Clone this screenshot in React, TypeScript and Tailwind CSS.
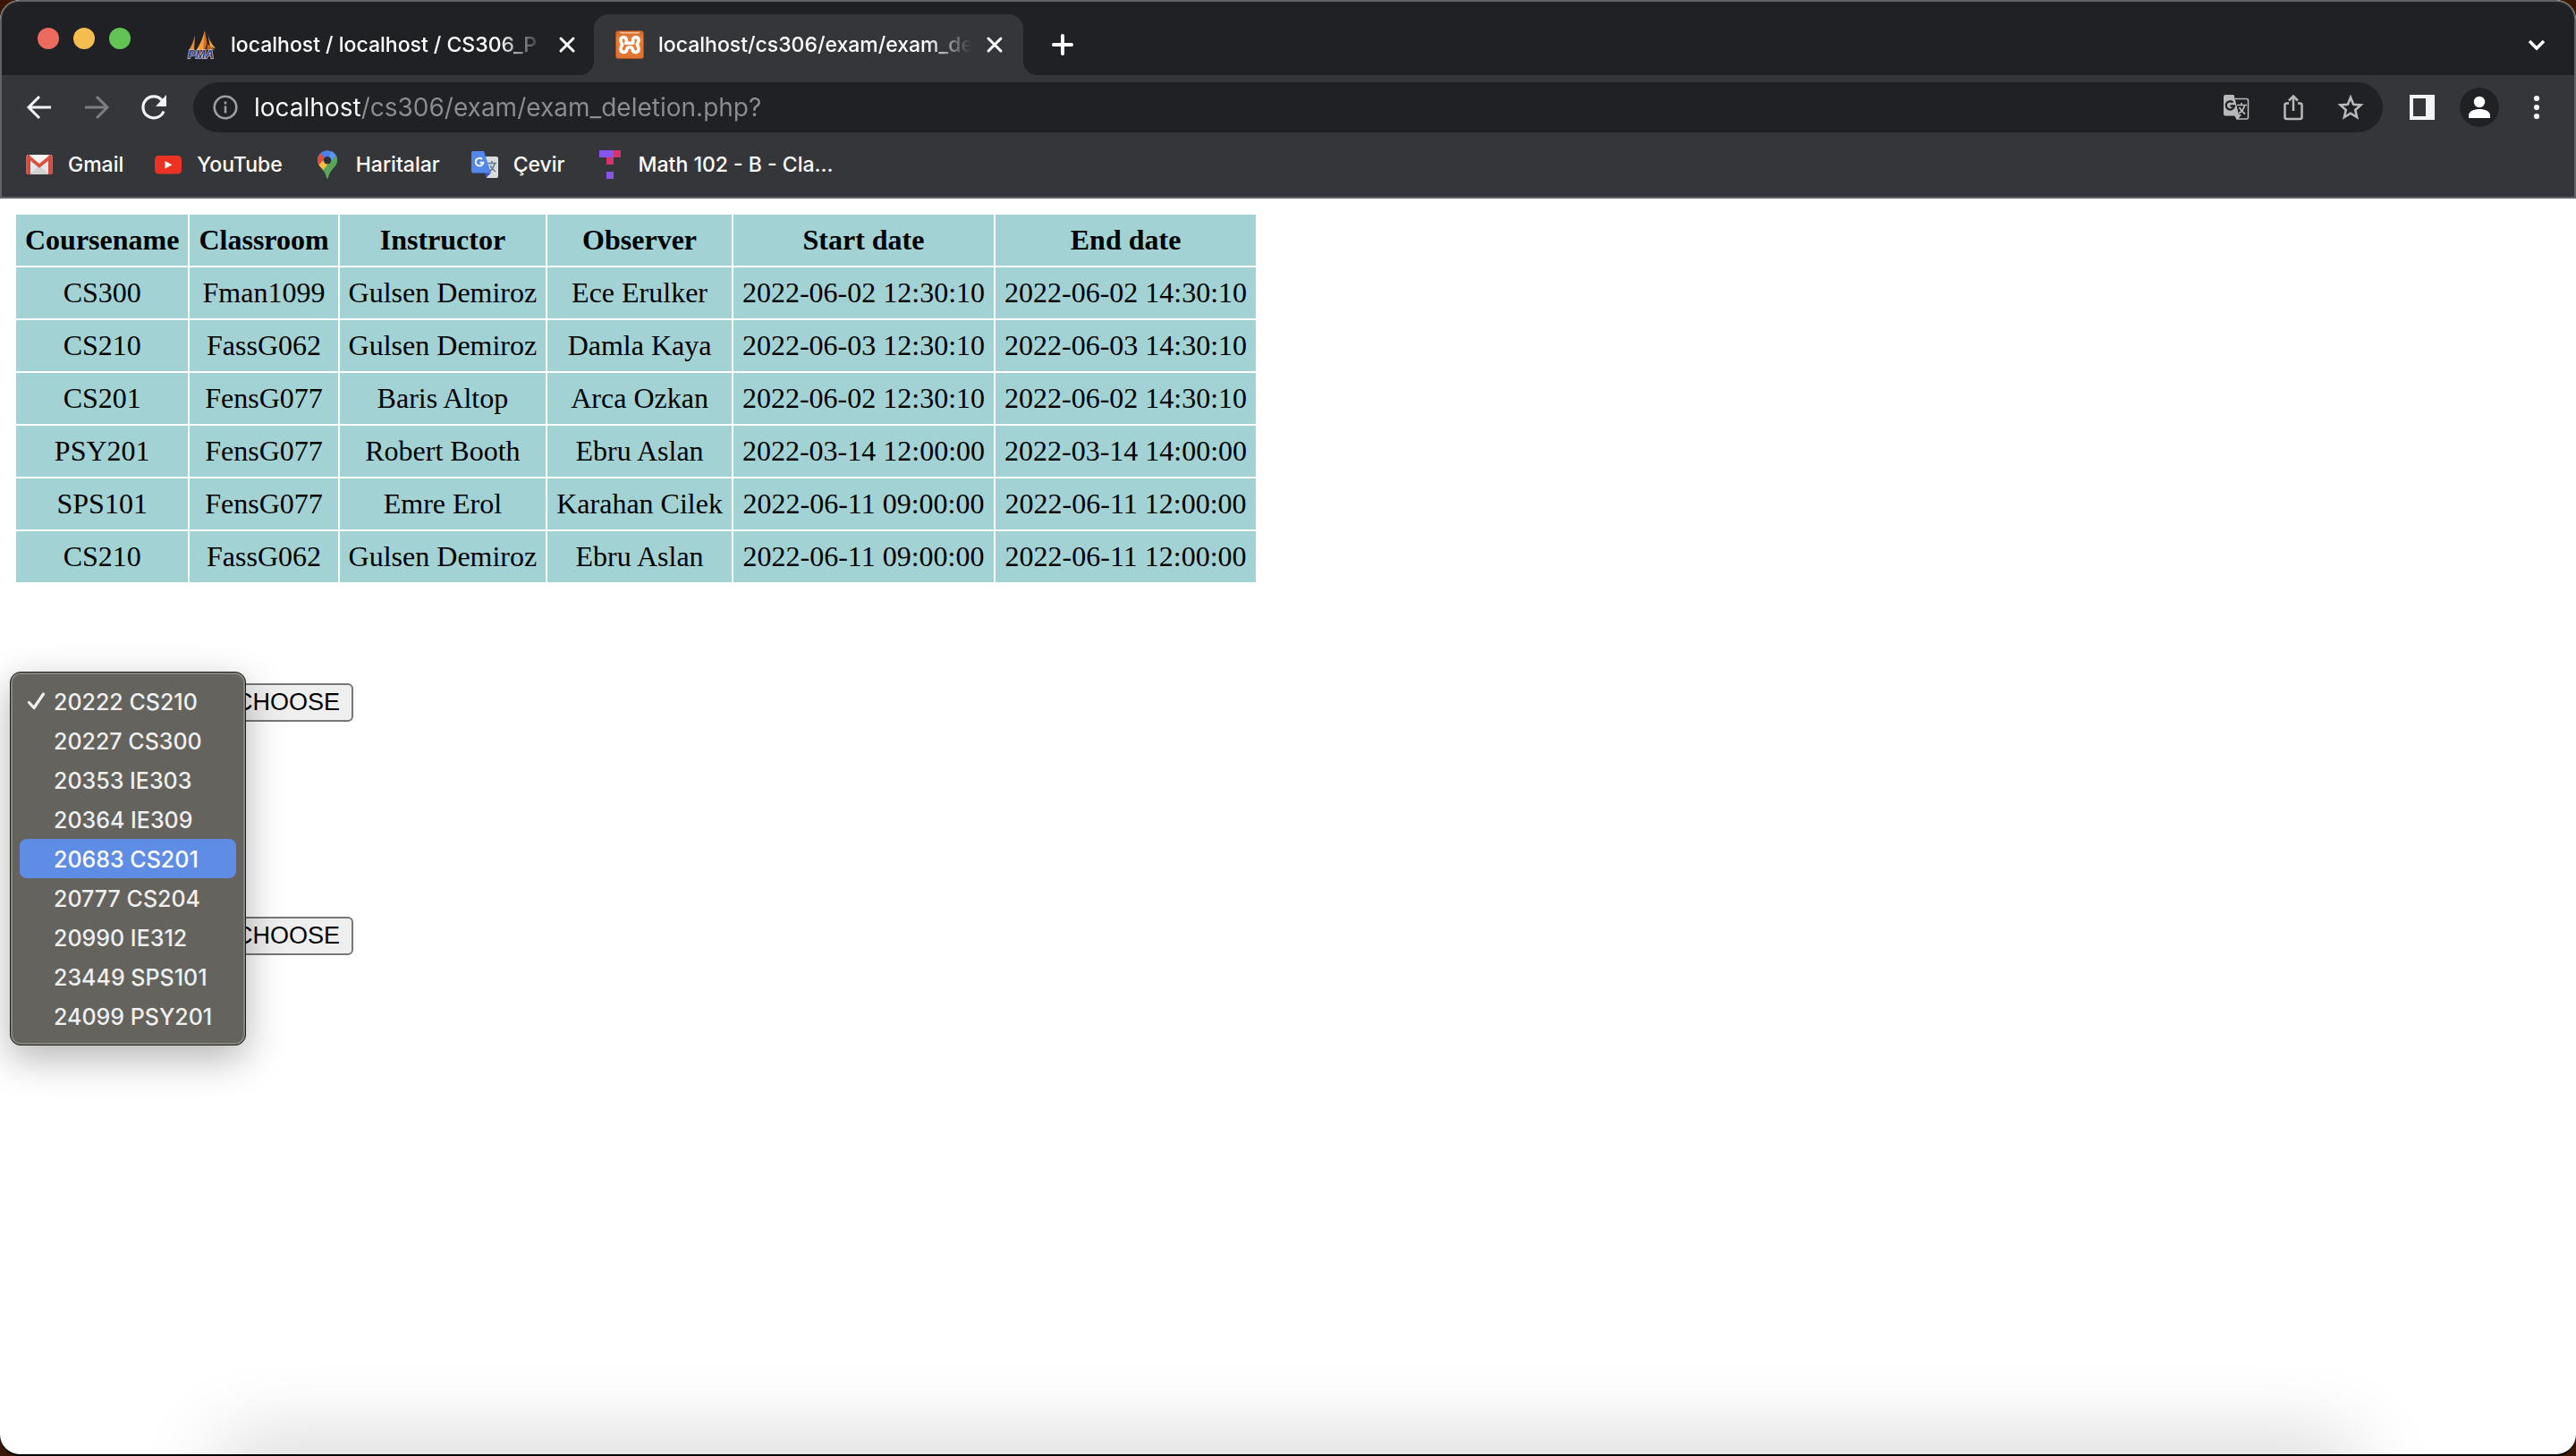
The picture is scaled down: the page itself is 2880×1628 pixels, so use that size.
import React from "react";

const columns = ["Coursename", "Classroom", "Instructor", "Observer", "Start date", "End date"];

const exams = [
  ["CS300", "Fman1099", "Gulsen Demiroz", "Ece Erulker", "2022-06-02 12:30:10", "2022-06-02 14:30:10"],
  ["CS210", "FassG062", "Gulsen Demiroz", "Damla Kaya", "2022-06-03 12:30:10", "2022-06-03 14:30:10"],
  ["CS201", "FensG077", "Baris Altop", "Arca Ozkan", "2022-06-02 12:30:10", "2022-06-02 14:30:10"],
  ["PSY201", "FensG077", "Robert Booth", "Ebru Aslan", "2022-03-14 12:00:00", "2022-03-14 14:00:00"],
  ["SPS101", "FensG077", "Emre Erol", "Karahan Cilek", "2022-06-11 09:00:00", "2022-06-11 12:00:00"],
  ["CS210", "FassG062", "Gulsen Demiroz", "Ebru Aslan", "2022-06-11 09:00:00", "2022-06-11 12:00:00"],
];

const courses = [
  "20222 CS210",
  "20227 CS300",
  "20353 IE303",
  "20364 IE309",
  "20683 CS201",
  "20777 CS204",
  "20990 IE312",
  "23449 SPS101",
  "24099 PSY201",
];

function CloseIcon() {
  return (
    <svg viewBox="0 0 32 32" className="size-8" fill="none" stroke="#fff" strokeWidth="3" strokeLinecap="round">
      <path d="M9 9l14 14M23 9L9 23" />
    </svg>
  );
}

function PmaIcon() {
  return (
    <svg viewBox="0 0 32 32" className="size-8 shrink-0 overflow-visible">
      <path d="M8 5L7 22H1C4 18 6.500 12 8 5z" fill="#e58b3a" />
      <path d="M19 0C17 8 14 15 9.500 22h9z" fill="#f89c3c" />
      <path d="M19 0l2.500 14L19 22h-2z" fill="#c96f28" />
      <path d="M22 2c1 7 4 13 9 18l-6-1z" fill="#f0a04a" />
      <path d="M22 15l8 7h-9z" fill="#b9652a" />
      <text x="0" y="31" fontFamily="Liberation Sans" fontSize="13" fontWeight="700" fontStyle="italic" fill="#3b3f78" stroke="#c8c8da" strokeWidth="1.400" paintOrder="stroke">
        PMA
      </text>
    </svg>
  );
}

function XamppIcon() {
  return (
    <svg viewBox="0 0 32 32" className="size-8 shrink-0">
      <defs>
        <linearGradient id="xg" x1="0" y1="0" x2="0" y2="1">
          <stop offset="0" stopColor="#c9682d" />
          <stop offset=".3" stopColor="#ec7c36" />
          <stop offset="1" stopColor="#e07330" />
        </linearGradient>
      </defs>
      <rect x=".5" y=".5" width="31" height="31" rx="2.500" fill="url(#xg)" stroke="#a4501c" />
      <path d="M4 1.800h24l-2 1.800H6z" fill="#f6bd94" />
      <g stroke="#fff" strokeWidth="3.600" fill="none" strokeLinecap="round" strokeLinejoin="round">
        <path d="M12.300 12v-1.500c0-4-6.300-4-6.300.5 0 2.300 1 3.500 1.800 5-1 1.500-1.800 2.800-1.800 4.800 0 4.800 6.300 4.700 6.800.4.200-1.900 1.200-2.500 3.200-2.500s3 .6 3.200 2.500c.5 4.300 6.800 4.400 6.800-.4 0-2-.8-3.300-1.800-4.800.8-1.500 1.800-2.700 1.800-5 0-4.500-6.300-4.500-6.300-.5V14.300H11.500" />
      </g>
    </svg>
  );
}

function GmailIcon() {
  return (
    <svg viewBox="0 0 32 32" className="size-8">
      <rect x="1.500" y="5" width="29" height="22" rx="2" fill="#e6e6e6" />
      <path d="M5 27l11-10 11 10z" fill="#d2d2d2" />
      <path d="M1.500 7.500A2.500 2.500 0 0 1 6 6v21H3.500a2 2 0 0 1-2-2zM30.500 7.500A2.500 2.500 0 0 0 26 6v21h2.500a2 2 0 0 0 2-2z" fill="#d24c40" />
      <path d="M5 5h22L16 14z" fill="#f4f4f4" />
      <path d="M2.500 6.500L16 17.500 29.500 6.500" stroke="#d9523f" strokeWidth="3.600" fill="none" />
    </svg>
  );
}

function YouTubeIcon() {
  return (
    <svg viewBox="0 0 32 32" className="size-8">
      <rect x="1" y="6" width="30" height="20.500" rx="4.500" fill="#ea3323" />
      <path d="M12.500 12l8 4.200-8 4.200z" fill="#fff" />
    </svg>
  );
}

function MapsIcon() {
  return (
    <svg viewBox="0 0 32 32" className="size-8">
      <defs>
        <clipPath id="pin">
          <path d="M16 .5C9.800 .5 5 5.300 5 11.300c0 5 3.500 7.500 6.500 11.200 2.200 2.700 3 5 3.500 8 .3 1.500 1.700 1.500 2 0 .5-3 1.300-5.300 3.500-8 3-3.700 6.500-6.200 6.500-11.200C27 5.300 22.200.5 16 .5z" />
        </clipPath>
      </defs>
      <g clipPath="url(#pin)">
        <rect width="32" height="32" fill="#58a55c" />
        <path d="M0 0h32v8l-6 3-10 8L4 12z" fill="#4a80ec" />
        <path d="M20 0h8v8l-12 8z" fill="#5a95f5" />
        <path d="M0 3l8 .5 8 7.500L4 19z" fill="#d95040" />
        <path d="M4 18.500L15 8l6 6-11 10.500z" fill="#f2bd42" />
        <path d="M26 5l6 6-3 12-13 9-6.500-8L20 12z" fill="#58a55c" />
      </g>
      <circle cx="16" cy="11.300" r="4.200" fill="#2b2f3c" />
    </svg>
  );
}

function TranslateIcon() {
  return (
    <svg viewBox="0 0 32 32" className="size-8">
      <path d="M13 7h16a2 2 0 0 1 2 2v20a2 2 0 0 1-2 2H18z" fill="#dcdcdc" />
      <path d="M16 25h7l-5.500 6z" fill="#3457c4" />
      <path d="M3 1h12l8 24.500H3a2 2 0 0 1-2-2V3a2 2 0 0 1 2-2z" fill="#5288ee" />
      <path d="M19.500 14.500h9.500M24 12v2.500M27 15c-1 4-4 7.500-6 9M22 17c1.500 3 4 5.500 6 7" stroke="#5c7a86" strokeWidth="1.500" fill="none" />
      <path d="M13 10a4.300 4.300 0 1 0 1.300 3.800H10.500" stroke="#fff" strokeWidth="2" fill="none" />
    </svg>
  );
}

function MathIcon() {
  return (
    <svg viewBox="0 0 32 32" className="size-8" shapeRendering="crispEdges">
      <path d="M4 0h16v8H4zM12 24h8v8h-8z" fill="#8655ea" />
      <path d="M20 0h8v8h-8zM12 8h8v8h-8z" fill="#d6336c" />
    </svg>
  );
}

const bookmarks = [
  { label: "Gmail", icon: <GmailIcon /> },
  { label: "YouTube", icon: <YouTubeIcon /> },
  { label: "Haritalar", icon: <MapsIcon /> },
  { label: "Çevir", icon: <TranslateIcon /> },
  { label: "Math 102 - B - Cla...", icon: <MathIcon /> },
];

function TabStrip() {
  return (
    <div className="flex h-[82px] items-end bg-[#202124]">
      <div className="flex h-[82px] w-[148px] items-start gap-4 pt-[29px] pl-10">
        <button aria-label="Close window" className="size-6 rounded-full bg-[#ed6a5e]" />
        <button aria-label="Minimise window" className="size-6 rounded-full bg-[#f5bd4f]" />
        <button aria-label="Zoom window" className="size-6 rounded-full bg-[#61c454]" />
      </div>
      <div className="ml-[60px] flex h-[68px] w-[454px] items-center gap-4">
        <PmaIcon />
        <span className="w-[356px] text-[23px] font-medium whitespace-nowrap text-white [mask-image:linear-gradient(to_right,#000_300px,transparent_350px)]">
          localhost / localhost / CS306_P
        </span>
        <button aria-label="Close tab" className="-ml-3">
          <CloseIcon />
        </button>
      </div>
      <div className="relative flex h-[68px] w-[480px] items-center gap-4 rounded-t-2xl bg-[#35363a] pl-6">
        <span className="absolute bottom-0 -left-4 size-4 bg-[radial-gradient(circle_at_0_0,transparent_16px,#35363a_16px)]" />
        <span className="absolute -right-4 bottom-0 size-4 bg-[radial-gradient(circle_at_100%_0,transparent_16px,#35363a_16px)]" />
        <XamppIcon />
        <span className="w-[356px] text-[23px] font-medium whitespace-nowrap text-white [mask-image:linear-gradient(to_right,#000_300px,transparent_350px)]">
          localhost/cs306/exam/exam_de
        </span>
        <button aria-label="Close tab" className="-ml-3">
          <CloseIcon />
        </button>
      </div>
      <button aria-label="New tab" className="ml-7 flex h-[68px] items-center">
        <svg viewBox="0 0 32 32" className="size-8" stroke="#fff" strokeWidth="4" strokeLinecap="round">
          <path d="M16 6v20M6 16h20" />
        </svg>
      </button>
      <button aria-label="Search tabs" className="mr-[26px] ml-auto flex h-[68px] items-center">
        <svg viewBox="0 0 32 32" className="size-8" fill="none" stroke="#fff" strokeWidth="3.400">
          <path d="M8 12l8 8 8-8" />
        </svg>
      </button>
    </div>
  );
}

function Toolbar() {
  return (
    <div className="flex h-[72px] items-center px-[26px]">
      <button aria-label="Back">
        <svg viewBox="0 0 32 32" className="size-8" fill="none" stroke="#f1f3f4" strokeWidth="3">
          <path d="M29 16H4M16 4L4 16l12 12" />
        </svg>
      </button>
      <button aria-label="Forward" className="ml-8">
        <svg viewBox="0 0 32 32" className="size-8" fill="none" stroke="#7d7e80" strokeWidth="3">
          <path d="M3 16h25M16 4l12 12-12 12" />
        </svg>
      </button>
      <button aria-label="Reload" className="ml-8">
        <svg viewBox="0 0 32 32" className="size-8" fill="none" stroke="#f1f3f4" strokeWidth="3.200">
          <path d="M27 20.500A12 12 0 1 1 24.800 7.800" />
          <path d="M30 2v13H18z" fill="#f1f3f4" stroke="none" />
        </svg>
      </button>
      <div className="ml-7 flex h-14 flex-1 items-center rounded-full bg-[#202124] pr-5 pl-[22px]">
        <svg viewBox="0 0 28 28" className="size-7 shrink-0" fill="none" stroke="#9aa0a6" strokeWidth="2.600">
          <circle cx="14" cy="14" r="12.300" />
          <path d="M14 12.500v8M14 7.500v3" />
        </svg>
        <label htmlFor="url" className="sr-only">
          Address
        </label>
        <input
          id="url"
          defaultValue="localhost/cs306/exam/exam_deletion.php?"
          className="ml-[18px] h-12 flex-1 bg-[linear-gradient(to_right,#fff_120px,#8c8d8f_120px)] bg-clip-text px-0 text-[28px] text-transparent outline-none"
        />
        <button aria-label="Translate page">
          <svg viewBox="0 0 32 32" className="size-8">
            <path d="M15 6.500h12.500a2 2 0 0 1 2 2v18.500a2 2 0 0 1-2 2H17l-3-6" fill="none" stroke="#b9b9ba" strokeWidth="1.600" />
            <path d="M4 2h9.500l5.500 22h3l-4 5.500-3-4H4a2 2 0 0 1-2-2V4a2 2 0 0 1 2-2z" fill="#b9b9ba" />
            <path d="M12.500 10.500a4.600 4.600 0 1 0 1.400 4H9.500" stroke="#202124" strokeWidth="2.300" fill="none" />
            <path d="M17 13.500h11M22 11v2.500M25.500 14c-1 4-3.500 7-6.500 9M19.500 16c1.500 3 4 5.500 6.500 7.500" stroke="#b9b9ba" strokeWidth="1.700" fill="none" />
          </svg>
        </button>
        <button aria-label="Share" className="ml-8">
          <svg viewBox="0 0 32 32" className="size-8" fill="none" stroke="#b9b9ba" strokeWidth="2.500">
            <path d="M11 11.500H8.500A2 2 0 0 0 6.500 13.500V27a2 2 0 0 0 2 2h15a2 2 0 0 0 2-2V13.500a2 2 0 0 0-2-2H21M16 20V4M11 8.500l5-5 5 5" />
          </svg>
        </button>
        <button aria-label="Bookmark this page" className="ml-8">
          <svg viewBox="0 0 32 32" className="size-8" fill="none" stroke="#b9b9ba" strokeWidth="2.600">
            <path d="M16 5l3.200 7.700 8.300.7-6.300 5.500 1.900 8.100-7.100-4.300L8.900 27l1.900-8.100-6.300-5.500 8.300-.7z" />
          </svg>
        </button>
      </div>
      <button aria-label="Side panel" className="ml-7">
        <svg viewBox="0 0 32 32" className="size-8">
          <path d="M2 2h28v28H2zM6 6v20h14V6z" fill="#f1f3f4" fillRule="evenodd" />
        </svg>
      </button>
      <button aria-label="Profile" className="ml-[26px] size-11 rounded-full bg-[#202124]">
        <svg viewBox="0 0 44 44" className="size-11" fill="#fff">
          <circle cx="22" cy="16" r="6.200" />
          <path d="M10 34v-3c0-4.500 6-7 12-7s12 2.500 12 7v3z" />
        </svg>
      </button>
      <button aria-label="Menu" className="ml-[26px]">
        <svg viewBox="0 0 32 32" className="size-8" fill="#f1f3f4">
          <circle cx="16" cy="6" r="3.100" />
          <circle cx="16" cy="16" r="3.100" />
          <circle cx="16" cy="26" r="3.100" />
        </svg>
      </button>
    </div>
  );
}

function CourseMenu() {
  return (
    <ul
      role="listbox"
      aria-label="Course"
      className="absolute -top-[13px] -left-[5px] z-10 w-[264px] rounded-xl border border-[#1c1c1c] bg-[#64635e] p-[10px] font-[Inter,sans-serif] text-[25px] leading-[44px] font-medium text-[#efefee] shadow-[inset_0_0_0_2px_#85847f,0_14px_44px_rgba(0,0,0,0.3)]"
    >
      {courses.map((course, i) => (
        <li
          key={course}
          role="option"
          aria-selected={i === 0}
          className={
            i === 4
              ? "flex h-11 items-center rounded-lg bg-[#5f8de6] text-white"
              : "flex h-11 items-center"
          }
        >
          <span className="flex w-[38px] shrink-0 pl-2">
            {i === 0 && (
              <svg viewBox="0 0 22 22" className="size-[22px]" fill="none" stroke="#efefee" strokeWidth="3.200" strokeLinecap="round" strokeLinejoin="round">
                <path d="M2.500 12.500l5.500 6L18.500 3" />
              </svg>
            )}
          </span>
          <span className="pt-px whitespace-nowrap">{course}</span>
        </li>
      ))}
    </ul>
  );
}

function ChooseForm({ id, open }: { id: string; open?: boolean }) {
  return (
    <form className="relative flex h-[43px] items-center gap-2" onSubmit={(e) => e.preventDefault()}>
      <label htmlFor={id} className="sr-only">
        Exam
      </label>
      <select id={id} className="h-[38px] w-[224px] rounded-lg border border-[#767676] bg-white text-2xl leading-8">
        {courses.map((course) => (
          <option key={course}>{course}</option>
        ))}
      </select>
      <button className="h-[43px] rounded-md border-2 border-[#767676] bg-[#efefef] px-[13px] pb-px text-[27px] leading-[38px] text-black">
        CHOOSE
      </button>
      {open && <CourseMenu />}
    </form>
  );
}

export default function App() {
  return (
    <div className="flex min-h-screen flex-col bg-[#3a1804] pb-[2px] font-[Inter,sans-serif]">
      <div className="relative flex flex-1 flex-col overflow-hidden rounded-[22px] bg-white shadow-[0_2px_0_#000]">
        <header className="rounded-t-[22px] border-2 border-[#626367] bg-[#35363a]">
          <div className="overflow-hidden rounded-t-[20px]">
            <TabStrip />
          </div>
          <Toolbar />
          <nav className="flex h-16 items-center gap-[34px] px-[26px] pb-2">
            {bookmarks.map((b) => (
              <a key={b.label} href="#" className="flex items-center gap-4 text-[23px] font-medium text-white">
                {b.icon}
                {b.label}
              </a>
            ))}
          </nav>
        </header>
        <main className="flex-1 p-4 font-['Liberation_Sans',Arial,sans-serif]">
          <table className="border-collapse bg-[#a2d2d4] text-center font-['Liberation_Serif',serif] text-[32px] leading-[37px] text-black">
            <thead>
              <tr>
                {columns.map((c) => (
                  <th key={c} className="border-2 border-white p-[10px] font-bold">
                    {c}
                  </th>
                ))}
              </tr>
            </thead>
            <tbody>
              {exams.map((row, r) => (
                <tr key={r}>
                  {row.map((cell, c) => (
                    <td key={c} className="border-2 border-white p-[10px] whitespace-nowrap">
                      {cell}
                    </td>
                  ))}
                </tr>
              ))}
            </tbody>
          </table>
          <div className="mt-[111px] flex flex-col gap-[218px]">
            <ChooseForm id="exam" open />
            <ChooseForm id="exam-second" />
          </div>
        </main>
        <div className="pointer-events-none absolute right-[260px] -bottom-10 left-[260px] h-10 shadow-[0_0_90px_10px_rgba(0,0,0,0.21)]" />
      </div>
    </div>
  );
}
